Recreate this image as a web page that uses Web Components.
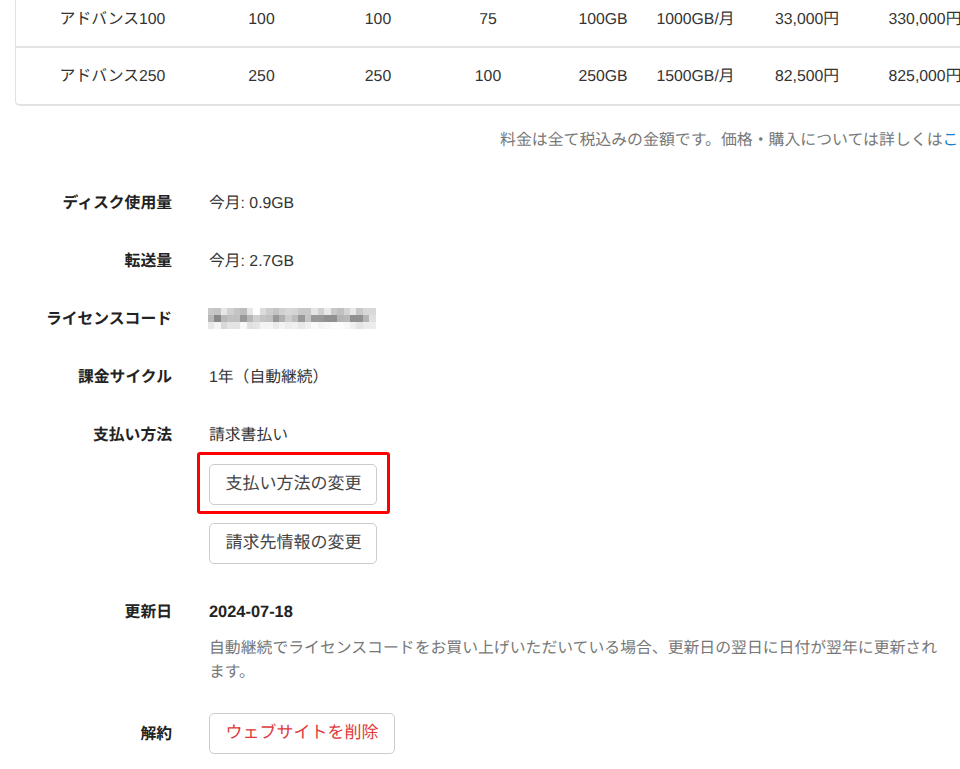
<!DOCTYPE html>
<html lang="ja"><head><meta charset="utf-8">
<style>
html,body{margin:0;padding:0;background:#fff}
body{width:960px;height:769px;overflow:hidden;font-family:"Liberation Sans","Noto Sans CJK JP",sans-serif;color:#333;font-size:16px;text-rendering:geometricPrecision}
</style></head><body>
<plan-page>
<plan-table>
<plan-row first cells="アドバンス100|100|100|75|100GB|1000GB/月|33,000円|330,000円"></plan-row>
<plan-row last cells="アドバンス250|250|250|100|250GB|1500GB/月|82,500円|825,000円"></plan-row>
</plan-table>
<price-note>料金は全て税込みの金額です。価格・購入については詳しくは<a>こちら</a></price-note>
<info-row label="ディスク使用量" h="58">今月: 0.9GB</info-row>
<info-row label="転送量" h="58">今月: 2.7GB</info-row>
<info-row label="ライセンスコード" h="58"><blur-code></blur-code></info-row>
<info-row label="課金サイクル" h="58">1年（自動継続）</info-row>
<info-row label="支払い方法" h="177"><pay-block></pay-block></info-row>
<info-row label="更新日" h="113"><renew-block></renew-block></info-row>
<info-row label="解約" h="50" btn><ui-btn danger>ウェブサイトを削除</ui-btn></info-row>
</plan-page>
<script>
function def(name, css, html, init){
  customElements.define(name, class extends HTMLElement{
    constructor(){super();const s=this.attachShadow({mode:'open'});s.innerHTML='<style>'+css+'</style>'+html;}
    connectedCallback(){ if(init) init(this); }
  });
}
def('plan-page',':host{display:block;width:960px;height:769px;overflow:hidden}','<slot></slot>');
def('plan-table',':host{display:block;margin-left:15px;width:1100px;border:1px solid #e2e2e2;border-bottom-width:2px;border-top:0;border-radius:0 0 5px 5px}','<slot></slot>');
def('plan-row',`:host{display:grid;grid-template-columns:193px 105px 128px 92px 138px 47px 176px 60px;align-items:center;box-sizing:border-box;font-size:15.8px;line-height:22px;color:#333}
:host([first]){height:48px;padding-bottom:7px;border-bottom:2px solid #e4e4e4}
:host([last]){height:56px;padding-top:1px}
span{justify-self:center;white-space:nowrap}`,'',el=>{
  if(el.shadowRoot.querySelector('span'))return;
  el.getAttribute('cells').split('|').forEach(t=>{const s=document.createElement('span');s.textContent=t;el.shadowRoot.appendChild(s);});
});
def('price-note',`:host{display:block;white-space:nowrap;padding:24px 0 0 500px;height:61px;line-height:22px;font-size:15.9px;color:#777}
::slotted(a){color:#1b7ec9}`,'<slot></slot>');
def('info-row',`:host{display:grid;grid-template-columns:172px 1fr;column-gap:37px;box-sizing:border-box;padding-top:2px;font-size:15.8px;color:#333;line-height:22px}
:host([btn]){padding-top:0}
.l{font-weight:700;text-align:right;color:#222;white-space:nowrap}
:host([btn]) .l{line-height:44px}
.v{min-width:0}`,'<div class="l"></div><div class="v"><slot></slot></div>',el=>{
  el.shadowRoot.querySelector('.l').textContent=el.getAttribute('label');
  el.style.height=el.getAttribute('h')+'px';
});
def('ui-btn',`:host{display:inline-block;box-sizing:border-box;height:41px;line-height:38px;padding:0 14px 0 15.5px;border:1.5px solid #ccc;border-radius:5px;background:#fff;font-size:17px;color:#444;white-space:nowrap}
:host([danger]){color:#e0393a;padding-right:15px}`,'<slot></slot>');
def('pay-block',`:host{display:flex;flex-direction:column;align-items:flex-start}
.t{height:27px}
.mark{border:3px solid #f00;border-radius:3px;padding:9px 10.5px 6px 9px;margin-left:-12px;display:flex}
.next{margin-top:9px;display:flex}`,'<div class="t">請求書払い</div><div class="mark"><ui-btn>支払い方法の変更</ui-btn></div><div class="next"><ui-btn>請求先情報の変更</ui-btn></div>');
def('renew-block',`:host{display:block;margin-top:-1px}
b{display:block;font-size:16.4px;margin-bottom:14px;color:#222}
p{margin:0;color:#777;font-size:15.85px;line-height:24px;width:735px}`,'<b>2024-07-18</b><p>自動継続でライセンスコードをお買い上げいただいている場合、更新日の翌日に日付が翌年に更新されます。</p>');
const codes=[
'c8c4e6d0c4bce6ffdcccc4d0d8d4c8c8e4d0e8c8c0d4e8c8d8d8',
'b888b8c0c098b8d0c4c098b0ccbc98c498989090b4b89090b4e0',
'e8f4d8e4e4f8e0e4f4f4eaf4ecf0e8f0faf4f8fcfcf8f0e4ecec'];
def('blur-code',`:host{display:grid;grid-template-columns:repeat(26,6.46px);grid-auto-rows:7px;width:168px;height:21px;margin:-1px 0 0 -1px}
i{display:block}`,'',el=>{
  if(el.shadowRoot.querySelector('i'))return;
  codes.forEach(r=>{for(let k=0;k<26;k++){const i=document.createElement('i');i.style.background='#'+r.substr(k*2,2).repeat(3);el.shadowRoot.appendChild(i);}});
});
</script>
</body></html>
